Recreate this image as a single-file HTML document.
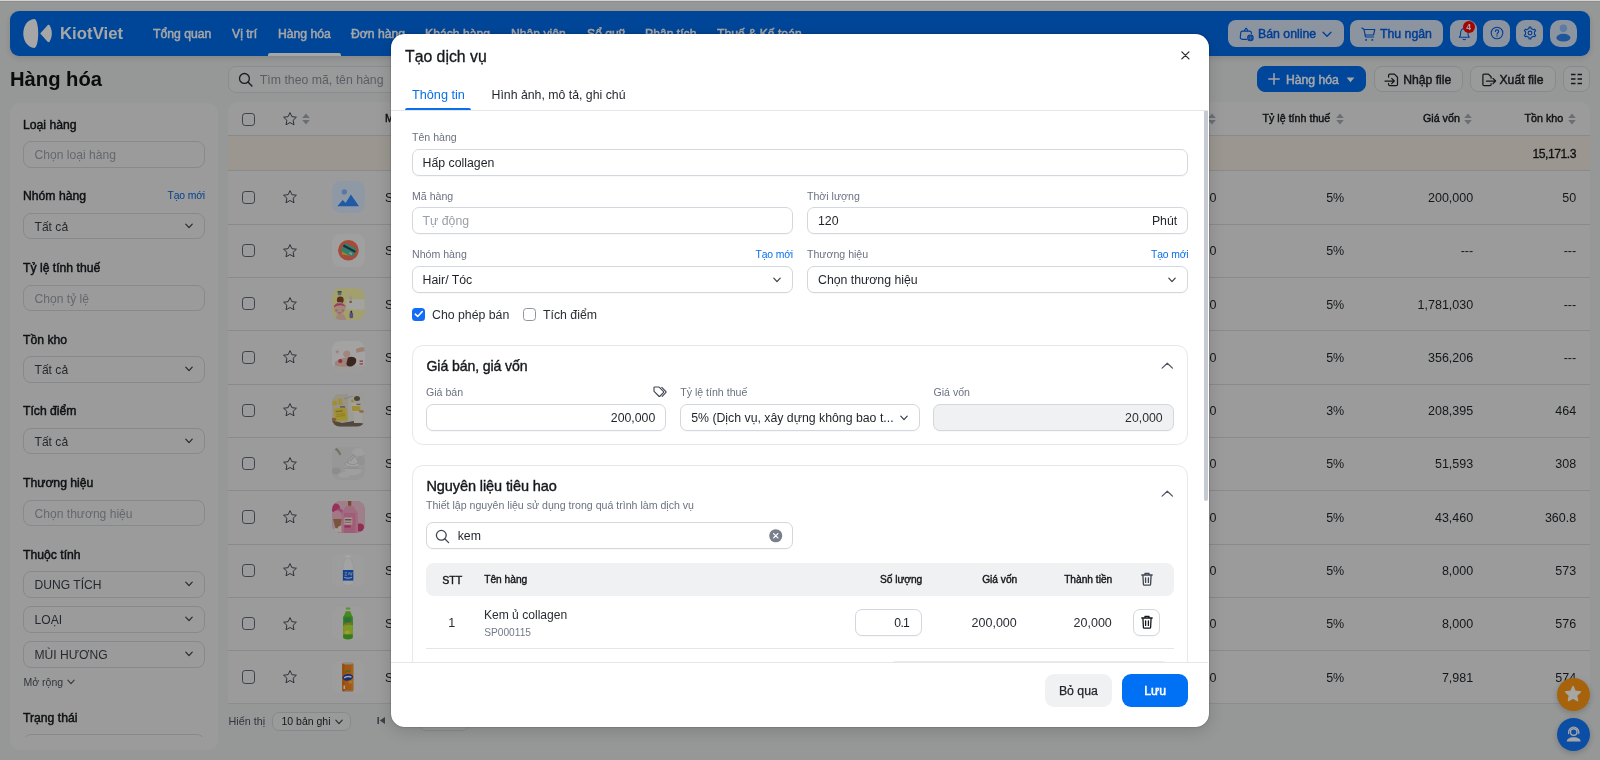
<!DOCTYPE html>
<html lang="vi">
<head>
<meta charset="utf-8">
<title>Hàng hóa - KiotViet</title>
<style>
*{box-sizing:border-box;margin:0;padding:0}
html,body{width:1600px;height:760px;overflow:hidden}
body{font-family:"Liberation Sans",sans-serif;background:#e7eae9;color:#1f2329;position:relative;font-size:12px}
.abs{position:absolute}
#root{position:absolute;left:0;top:0;width:1600px;height:760px;overflow:hidden;will-change:transform}
#page{position:absolute;left:0;top:0;width:1600px;height:760px;overflow:hidden;background:#e7eae9}
#topstrip{position:absolute;left:0;top:0;width:1600px;height:1.9px;background:linear-gradient(#d4d4d4 0,#d2d2d2 55%,#8c8e8e 56%,#8c8e8e 100%);z-index:6}
/* header */
#hdr{position:absolute;left:10px;top:11px;width:1580px;height:45px;background:#006cea;border-radius:9px;box-shadow:0 2px 6px rgba(0,0,0,.12)}
.nav{position:absolute;top:0;height:45px;line-height:46.600px;color:#fff;font-size:12.2px;white-space:nowrap;-webkit-text-stroke:.45px #fff}
#navline{position:absolute;left:258px;top:42px;width:73px;height:3px;background:#fff;border-radius:2px 2px 0 0}
.pill{position:absolute;top:9px;height:26.800px;border-radius:8px;background:#d8e4f4;color:#005fe6;font-size:12.3px;line-height:28.600px;white-space:nowrap;-webkit-text-stroke:.45px #005fe6}
/* title row */
#ptitle{position:absolute;left:10px;top:65px;font-size:20.2px;font-weight:700;line-height:28px;color:#111}
#search{position:absolute;left:228.300px;top:66px;width:400px;height:27px;border:1px solid #d4d7dc;border-radius:8px;background:#eceeed}
.btn{position:absolute;top:66px;height:26px;border-radius:8px;border:1px solid #d0d3d8;background:#eceeed;font-size:12.2px;line-height:26.200px;white-space:nowrap;color:#1f2329;-webkit-text-stroke:.45px}
/* sidebar */
#side{position:absolute;left:10px;top:102.500px;width:208px;height:647.500px;background:#eeefef;border-radius:10px;overflow:hidden}
.slabel{position:absolute;left:13px;margin-top:.4px;-webkit-text-stroke:.45px;font-size:12.2px;line-height:16px;color:#15181c;white-space:nowrap}
.sinput{position:absolute;left:13px;margin-top:-.3px;width:182px;height:26.300px;border:1px solid #d0d3d8;border-radius:8px;background:#eeefef;font-size:12.1px;line-height:26.200px;padding-left:10.500px;color:#9a9fa8;white-space:nowrap}
.sinput.sel{color:#3a3f47}
.chev{position:absolute;right:11px;top:9px;width:8px;height:6px}
.slink{position:absolute;right:13px;font-size:10.4px;letter-spacing:-.15px;color:#0a63d8;line-height:16px}
/* table */
#tbl{position:absolute;left:228px;top:102px;width:1362px;height:602px;background:#eeefef;border-radius:10px 10px 0 0;overflow:hidden;border-bottom:1px solid #d6d8dc}
.trow{position:absolute;left:0;width:1362px;border-top:1px solid #d3d5da}
.th{position:absolute;top:0;height:33px;line-height:33px;font-size:10.7px;-webkit-text-stroke:.4px;color:#15181c;white-space:nowrap}
.td{position:absolute;font-size:12.5px;color:#1f2329;white-space:nowrap;text-align:right;line-height:16px}
.cb{position:absolute;left:14px;width:13.200px;height:13.200px;border:1.100px solid #5f6775;border-radius:3.200px;background:transparent}
.thumb svg{display:block}
.thumb{position:absolute;left:104.300px;top:9.500px;width:32.500px;height:32.500px;border-radius:8.500px;overflow:hidden}
/* overlay */
#ovl{position:absolute;left:0;top:0;width:1600px;height:760px;background:rgba(0,0,0,.35);z-index:5}
/* modal */
#modal{position:absolute;left:391px;top:34px;width:817.600px;height:693.400px;background:#fff;border-radius:13.500px;z-index:10;overflow:hidden;box-shadow:0 0 1.5px rgba(0,0,30,.5),0 4px 16px rgba(0,0,0,.15)}
.ml{position:absolute;margin-top:-.4px;font-size:10.6px;color:#6b7280;line-height:14px;white-space:nowrap}
.minput{position:absolute;height:26.5px;border:1px solid #d3d7de;border-radius:7px;background:#fff;font-size:12.3px;line-height:26.200px;padding:0 10px;color:#1f2329;white-space:nowrap;box-shadow:0 1px 1px rgba(0,0,0,.03)}
.mlink{position:absolute;margin-top:.8px;font-size:10.4px;letter-spacing:-.15px;color:#0a6fe8;line-height:14px;white-space:nowrap}
.card{position:absolute;left:19.5px;width:776.300px;border:1px solid #e6e8ec;border-radius:11px;background:#fff}
.ctitle{position:absolute;left:14px;font-size:14.3px;-webkit-text-stroke:.38px;color:#15181c;line-height:18px;white-space:nowrap;letter-spacing:-.1px}
</style>
</head>
<body>
<div id="root">
<div id="page">
  <div id="hdr">
    <svg class="abs" style="left:13px;top:8px" width="30" height="29" viewBox="0 0 30 29"><path d="M11.2 0.1 C4.5 0.6 0.3 7 0.3 14.5 C0.3 22 4.5 28.4 11.2 28.9 C13.6 29 15.2 22 15.2 14.5 C15.2 7 13.6 0 11.2 0.1 Z" fill="#fff"/><path d="M17.2 14.4 L24.6 6.2 C25.3 5.5 26.2 5.6 26.7 6.5 C29.6 11.4 29.6 17.6 26.7 22.5 C26.2 23.4 25.3 23.5 24.6 22.8 Z" fill="#fff"/></svg>
    <div class="abs" style="left:50px;top:0;height:45px;line-height:46px;font-size:16.7px;font-weight:700;color:#fff;letter-spacing:.05px">KiotViet</div>
    <div class="nav" style="left:143px">Tổng quan</div>
    <div class="nav" style="left:222px">Vị trí</div>
    <div class="nav" style="left:268px">Hàng hóa</div>
    <div class="nav" style="left:341px">Đơn hàng</div>
    <div class="nav" style="left:415px">Khách hàng</div>
    <div class="nav" style="left:501px">Nhân viên</div>
    <div class="nav" style="left:577px">Sổ quỹ</div>
    <div class="nav" style="left:635px">Phân tích</div>
    <div class="nav" style="left:707px">Thuế &amp; Kế toán</div>
    <div id="navline"></div>
    <div class="pill" style="left:1218px;width:115.500px"><svg class="abs" style="left:10.500px;top:6.500px" width="16" height="15" viewBox="0 0 16 15"><path d="M5.300 4.100 6.600 1.500c.2-.4.800-.4 1 0L8.900 4.100" fill="none" stroke="#005fe6" stroke-width="1.150" stroke-linejoin="round"/><path d="M7.500 12.300H3.200c-1.200 0-2-.9-1.900-2L1.700 5.900c.1-1 .9-1.800 1.900-1.800h6.900c1 0 1.800.7 1.900 1.700l.1.900" fill="none" stroke="#005fe6" stroke-width="1.150" stroke-linecap="round"/><circle cx="11.400" cy="10.900" r="3.300" fill="#005fe6"/><path d="M11.400 8.500v4.800M9.900 9.500v2.800M12.900 9.500v2.800" stroke="#b9cdf0" stroke-width=".55"/></svg><span class="abs" style="left:30px">Bán online</span><svg class="abs" style="left:94px;top:10.500px" width="10" height="7" viewBox="0 0 10 7"><path d="M1 1.300 5 5.300 9 1.300" fill="none" stroke="#005fe6" stroke-width="1.300" stroke-linecap="round" stroke-linejoin="round"/></svg></div>
    <div class="pill" style="left:1340px;width:93.400px"><svg class="abs" style="left:10.500px;top:6.500px" width="16" height="15" viewBox="0 0 16 15"><path d="M.9 1.100 2.400 1.700c.3.100.5.400.6.700L4.500 10h8" fill="none" stroke="#005fe6" stroke-width="1.150" stroke-linecap="round" stroke-linejoin="round"/><path d="M3.100 2.500H13.800L12.500 8H4.200" fill="none" stroke="#005fe6" stroke-width="1.150" stroke-linecap="round" stroke-linejoin="round"/><circle cx="5.100" cy="12.900" r=".95" fill="#005fe6"/><circle cx="11.300" cy="12.900" r=".95" fill="#005fe6"/></svg><span class="abs" style="left:30px">Thu ngân</span></div>
    <div class="pill" style="left:1440px;width:26.800px;border-radius:9px"><svg class="abs" style="left:6.500px;top:6.500px" width="16" height="15" viewBox="0 0 16 15"><path d="M2.300 10.200c1-.9 1.300-2 1.300-3.500V5.800C3.600 3.300 5.200 1.600 7.300 1.600S11 3.300 11 5.800v.9c0 1.500.3 2.600 1.300 3.500z" fill="none" stroke="#005fe6" stroke-width="1.100" stroke-linejoin="round"/><path d="M6.200 12.300c.3.600 1.900.6 2.200 0" fill="none" stroke="#005fe6" stroke-width="1.200" stroke-linecap="round"/></svg><div class="abs" style="left:12.600px;top:1.300px;width:12.200px;height:12.200px;border-radius:50%;background:#fa0808;color:#fff;font-size:8.500px;font-weight:700;line-height:12.200px;text-align:center;-webkit-text-stroke:0">4</div></div>
    <div class="pill" style="left:1473.100px;width:26.800px;border-radius:9px"><svg class="abs" style="left:6.500px;top:6.300px" width="14" height="14" viewBox="0 0 14 14"><circle cx="7" cy="7" r="5.800" fill="none" stroke="#005fe6" stroke-width="1.100"/><path d="M5.300 5.500c0-2.200 3.400-2.200 3.400 0 0 1.300-1.700 1.300-1.700 2.700" fill="none" stroke="#005fe6" stroke-width="1.100" stroke-linecap="round"/><circle cx="7" cy="10" r=".75" fill="#005fe6"/></svg></div>
    <div class="pill" style="left:1506.400px;width:26.800px;border-radius:9px"><svg class="abs" style="left:6.600px;top:6.300px" width="14" height="14" viewBox="0 0 14 14"><path d="M5.97 2.41 L6.11 0.97 L7.89 0.97 L8.03 2.41 L10.46 3.82 L11.78 3.21 L12.67 4.75 L11.48 5.59 L11.48 8.41 L12.67 9.25 L11.78 10.79 L10.46 10.18 L8.03 11.59 L7.89 13.03 L6.11 13.03 L5.97 11.59 L3.54 10.18 L2.22 10.79 L1.33 9.25 L2.52 8.41 L2.52 5.59 L1.33 4.75 L2.22 3.21 L3.54 3.82Z" fill="none" stroke="#005fe6" stroke-width="1.100" stroke-linejoin="round"/><circle cx="7" cy="7" r="1.900" fill="none" stroke="#005fe6" stroke-width="1.100"/></svg></div>
    <div class="pill" style="left:1540px;width:26.800px;border-radius:10px"><svg class="abs" style="left:0;top:0" width="27" height="27" viewBox="0 0 27 27"><circle cx="13.400" cy="8.300" r="3.700" fill="#8fbdfb"/><ellipse cx="13.400" cy="17.700" rx="7" ry="3.900" fill="#2e83ee"/></svg></div>
  </div>
  <div id="ptitle">Hàng hóa</div>
  <div id="search"><svg class="abs" style="left:8.500px;top:5px" width="15" height="15" viewBox="0 0 14 14"><circle cx="6" cy="6" r="4.600" fill="none" stroke="#2a2e35" stroke-width="1.250"/><path d="M9.5 9.5 13 13" stroke="#2a2e35" stroke-width="1.3" stroke-linecap="round"/></svg><span class="abs" style="left:30.500px;top:0;line-height:26.200px;font-size:12.300px;color:#8b909a;white-space:nowrap">Tìm theo mã, tên hàng</span></div>
  <div class="btn" style="left:1257px;width:109px;background:#006ef0;border-color:#006ef0;color:#fff"><svg class="abs" style="left:10px;top:6px" width="12" height="12" viewBox="0 0 12 12"><path d="M6 .8v10.4M.8 6h10.4" stroke="#fff" stroke-width="1.5" stroke-linecap="round"/></svg><span class="abs" style="left:28px">Hàng hóa</span><svg class="abs" style="left:88px;top:10px" width="9" height="6" viewBox="0 0 9 6"><path d="M.6.6h7.8L4.5 5.2z" fill="#fff"/></svg></div>
  <div class="btn" style="left:1373.500px;width:89.500px"><svg class="abs" style="left:9.500px;top:5.500px" width="16" height="14" viewBox="0 0 16 14"><path d="M4.600 4.200V2.300c0-.7.500-1.200 1.200-1.200h4.600l3.100 3.100v7.200c0 .7-.5 1.200-1.200 1.200H5.800c-.7 0-1.200-.5-1.200-1.200v-.9" fill="none" stroke="#1f2329" stroke-width="1.250" stroke-linecap="round" stroke-linejoin="round"/><path d="M1 8h9.200M7.700 5.400 10.300 8 7.700 10.600" fill="none" stroke="#1f2329" stroke-width="1.250" stroke-linecap="round" stroke-linejoin="round"/></svg><span class="abs" style="left:28.700px">Nhập file</span></div>
  <div class="btn" style="left:1470.300px;width:86.200px"><svg class="abs" style="left:9.500px;top:5.500px" width="16" height="14" viewBox="0 0 16 14"><path d="M10.100 10.700v.7c0 .7-.5 1.200-1.200 1.200H3.100c-.7 0-1.200-.5-1.200-1.200V2.300c0-.7.500-1.200 1.200-1.200h4.300l2.700 2.700v1.400" fill="none" stroke="#1f2329" stroke-width="1.250" stroke-linecap="round" stroke-linejoin="round"/><path d="M5.400 8h9.200M12 5.400 14.600 8 12 10.600" fill="none" stroke="#1f2329" stroke-width="1.250" stroke-linecap="round" stroke-linejoin="round"/></svg><span class="abs" style="left:28.200px">Xuất file</span></div>
  <div class="btn" style="left:1563px;width:27px"><svg class="abs" style="left:6px;top:6px" width="13" height="12" viewBox="0 0 13 12"><path d="M1 1.5h4.5M7.5 1.5H12M1 6h4.5M7.5 6H12M1 10.5h4.5M7.5 10.5H12" stroke="#1f2329" stroke-width="1.6"/></svg></div>
  <div id="side">
<div class="slabel" style="top:14px">Loại hàng</div><div class="sinput" style="top:39px">Chọn loại hàng</div>
<div class="slabel" style="top:85.5px">Nhóm hàng</div><div class="slink" style="top:85.5px">Tạo mới</div><div class="sinput sel" style="top:110.5px">Tất cả<svg class="chev" viewBox="0 0 8 6"><path d="M.8 1.2 4 4.6 7.2 1.2" fill="none" stroke="#3a3f47" stroke-width="1.2" stroke-linecap="round" stroke-linejoin="round"/></svg></div>
<div class="slabel" style="top:157.5px">Tỷ lệ tính thuế</div><div class="sinput" style="top:182.5px">Chọn tỷ lệ</div>
<div class="slabel" style="top:229px">Tồn kho</div><div class="sinput sel" style="top:254px">Tất cả<svg class="chev" viewBox="0 0 8 6"><path d="M.8 1.2 4 4.6 7.2 1.2" fill="none" stroke="#3a3f47" stroke-width="1.2" stroke-linecap="round" stroke-linejoin="round"/></svg></div>
<div class="slabel" style="top:300.5px">Tích điểm</div><div class="sinput sel" style="top:325.5px">Tất cả<svg class="chev" viewBox="0 0 8 6"><path d="M.8 1.2 4 4.6 7.2 1.2" fill="none" stroke="#3a3f47" stroke-width="1.2" stroke-linecap="round" stroke-linejoin="round"/></svg></div>
<div class="slabel" style="top:372.5px">Thương hiệu</div><div class="sinput" style="top:397.5px">Chọn thương hiệu</div>
<div class="slabel" style="top:444px">Thuộc tính</div><div class="sinput sel" style="top:469px">DUNG TÍCH<svg class="chev" viewBox="0 0 8 6"><path d="M.8 1.2 4 4.6 7.2 1.2" fill="none" stroke="#3a3f47" stroke-width="1.2" stroke-linecap="round" stroke-linejoin="round"/></svg></div>
<div class="sinput sel" style="top:504px">LOẠI<svg class="chev" viewBox="0 0 8 6"><path d="M.8 1.2 4 4.6 7.2 1.2" fill="none" stroke="#3a3f47" stroke-width="1.2" stroke-linecap="round" stroke-linejoin="round"/></svg></div>
<div class="sinput sel" style="top:539px">MÙI HƯƠNG<svg class="chev" viewBox="0 0 8 6"><path d="M.8 1.2 4 4.6 7.2 1.2" fill="none" stroke="#3a3f47" stroke-width="1.2" stroke-linecap="round" stroke-linejoin="round"/></svg></div>
<div class="abs" style="left:13.500px;top:572.200px;font-size:10.500px;color:#4b5260;line-height:14px">Mở rộng<svg style="margin-left:4px;vertical-align:1px" width="8" height="6" viewBox="0 0 8 6"><path d="M.8 1.2 4 4.6 7.2 1.2" fill="none" stroke="#4b5260" stroke-width="1.1" stroke-linecap="round" stroke-linejoin="round"/></svg></div>
<div class="slabel" style="top:607px">Trạng thái</div>
<div class="abs" style="left:0;top:625px;width:208px;height:9.500px;overflow:hidden"><div class="sinput" style="top:6.500px"></div></div>
</div>
  <div id="tbl">
<div class="trow" style="top:0;height:33px;border-top:none"><div class="cb" style="top:10.700px"></div><svg class="abs" style="left:54px;top:9px" width="16" height="16" viewBox="0 0 16 16"><path d="M8 1.6 9.9 5.7 14.4 6.2 11.1 9.3 12 13.8 8 11.5 4 13.8 4.9 9.3 1.6 6.2 6.1 5.7z" fill="none" stroke="#454b56" stroke-width="1" stroke-linejoin="round"/></svg><svg class="abs" style="left:74px;top:11px" width="8" height="12" viewBox="0 0 8 12"><path d="M4 .4 7.800 5.100H.2z" fill="#a4a9b2"/><path d="M4 11.600 7.800 6.900H.2z" fill="#a4a9b2"/></svg><div class="th" style="left:157px">Mã hàng</div><svg class="abs" style="left:979.5px;top:11px" width="8" height="12" viewBox="0 0 8 12"><path d="M4 .4 7.800 5.100H.2z" fill="#a4a9b2"/><path d="M4 11.600 7.800 6.900H.2z" fill="#a4a9b2"/></svg><div class="th" style="left:1034.5px">Tỷ lệ tính thuế</div><svg class="abs" style="left:1108px;top:11px" width="8" height="12" viewBox="0 0 8 12"><path d="M4 .4 7.800 5.100H.2z" fill="#a4a9b2"/><path d="M4 11.600 7.800 6.900H.2z" fill="#a4a9b2"/></svg><div class="th" style="left:1195px">Giá vốn</div><svg class="abs" style="left:1236px;top:11px" width="8" height="12" viewBox="0 0 8 12"><path d="M4 .4 7.800 5.100H.2z" fill="#a4a9b2"/><path d="M4 11.600 7.800 6.900H.2z" fill="#a4a9b2"/></svg><div class="th" style="left:1296.5px">Tồn kho</div><svg class="abs" style="left:1339.5px;top:11px" width="8" height="12" viewBox="0 0 8 12"><path d="M4 .4 7.800 5.100H.2z" fill="#a4a9b2"/><path d="M4 11.600 7.800 6.900H.2z" fill="#a4a9b2"/></svg></div>
<div class="trow" style="top:33.200px;height:35.200px;background:#eee8de"><div class="td" style="right:14px;top:10px;font-size:12.200px;-webkit-text-stroke:.3px;letter-spacing:-.5px;color:#15181c">15,171.3</div></div>
<div class="trow" style="top:68.40px;height:53.3px"><div class="cb" style="top:19.300px"></div><svg class="abs" style="left:54px;top:17.900px" width="16" height="16" viewBox="0 0 16 16"><path d="M8 1.6 9.9 5.7 14.4 6.2 11.1 9.3 12 13.8 8 11.5 4 13.8 4.9 9.3 1.6 6.2 6.1 5.7z" fill="none" stroke="#454b56" stroke-width="1" stroke-linejoin="round"/></svg><div class="thumb" style="background:#dcebff"><svg width="32.5" height="32.5" viewBox="0 0 32.5 32.5"><circle cx="12.300" cy="10.900" r="2.700" fill="#86b9ff"/><path d="M5.300 25.200 10.700 18.900 13.600 22 18.900 13.400 27 25.200z" fill="#2e8aff"/></svg></div><div class="td" style="left:157px;top:18.5px;text-align:left">SP000125</div><div class="td" style="right:373.5px;top:18.5px">0</div><div class="td" style="right:245.8px;top:18.5px">5%</div><div class="td" style="right:116.8px;top:18.5px">200,000</div><div class="td" style="right:13.8px;top:18.5px">50</div></div>
<div class="trow" style="top:121.70px;height:53.3px"><div class="cb" style="top:19.300px"></div><svg class="abs" style="left:54px;top:17.900px" width="16" height="16" viewBox="0 0 16 16"><path d="M8 1.6 9.9 5.7 14.4 6.2 11.1 9.3 12 13.8 8 11.5 4 13.8 4.9 9.3 1.6 6.2 6.1 5.7z" fill="none" stroke="#454b56" stroke-width="1" stroke-linejoin="round"/></svg><div class="thumb" style="background:#f6f6f7"><svg width="32.5" height="32.5" viewBox="0 0 32.5 32.5"><circle cx="16.400" cy="16.200" r="10.300" fill="#ff7355"/><g transform="rotate(28 16.400 16.200)"><rect x="10.500" y="13.500" width="12" height="8" rx="1" fill="#f2c94c" transform="rotate(-22 16 17)"/><rect x="9.800" y="11.300" width="13.600" height="9" rx="1.200" fill="#4cc4a8"/><rect x="9.800" y="13.300" width="13.600" height="2.200" fill="#2d4660"/><rect x="18.500" y="17.200" width="3" height="1.700" rx=".4" fill="#d9f3ec"/></g></svg></div><div class="td" style="left:157px;top:18.5px;text-align:left">SP000124</div><div class="td" style="right:373.5px;top:18.5px">0</div><div class="td" style="right:245.8px;top:18.5px">5%</div><div class="td" style="right:116.8px;top:18.5px">---</div><div class="td" style="right:13.8px;top:18.5px">---</div></div>
<div class="trow" style="top:175.00px;height:53.3px"><div class="cb" style="top:19.300px"></div><svg class="abs" style="left:54px;top:17.900px" width="16" height="16" viewBox="0 0 16 16"><path d="M8 1.6 9.9 5.7 14.4 6.2 11.1 9.3 12 13.8 8 11.5 4 13.8 4.9 9.3 1.6 6.2 6.1 5.7z" fill="none" stroke="#454b56" stroke-width="1" stroke-linejoin="round"/></svg><div class="thumb" style="background:#f7f6aa"><svg width="32.5" height="32.5" viewBox="0 0 32.5 32.5"><rect x="14.500" y="11.300" width="18" height="10.200" fill="#fbfbf8"/><path d="M3.500 32.500c0-4 1.500-6.500 4-7.500l3 .5c2 1.500 3.500 4 3.500 7z" fill="#f6cdb8"/><circle cx="8.300" cy="12" r="3.400" fill="#8a4a2a"/><ellipse cx="7.600" cy="20.300" rx="5.600" ry="6.400" fill="#f8d2bf"/><path d="M1.900 19.500c.3-5.200 11-5.800 11.500-.6-3.200-2.300-8.200-2-11.500.6z" fill="#e9557f"/><path d="M2 18.200c1.500-3.500 9.500-4 11.300.2" fill="none" stroke="#f28aa6" stroke-width="1"/><circle cx="4.500" cy="22.500" r="1.300" fill="#f4a0a8"/><circle cx="10.800" cy="22.500" r="1.300" fill="#f4a0a8"/><path d="M6.200 24.500c1 .8 2 .8 3 0" stroke="#c8566a" stroke-width=".7" fill="none"/><rect x="5.800" y="3.800" width="3.600" height="3.400" rx=".8" fill="#7fa6a0"/><rect x="5.500" y="3" width="4.200" height="1.400" rx=".5" fill="#5c6f6d"/><rect x="17.200" y="7.600" width="2.800" height="6.500" rx=".9" fill="#f3e2c8"/><rect x="17.500" y="13" width="2.200" height="2" fill="#b9814f"/><rect x="17.500" y="24.600" width="3.600" height="5.600" rx="1.300" fill="#8a78b6"/><rect x="18.500" y="22.800" width="1.600" height="2" fill="#3f3653"/></svg></div><div class="td" style="left:157px;top:18.5px;text-align:left">SP000123</div><div class="td" style="right:373.5px;top:18.5px">0</div><div class="td" style="right:245.8px;top:18.5px">5%</div><div class="td" style="right:116.8px;top:18.5px">1,781,030</div><div class="td" style="right:13.8px;top:18.5px">---</div></div>
<div class="trow" style="top:228.30px;height:53.3px"><div class="cb" style="top:19.300px"></div><svg class="abs" style="left:54px;top:17.900px" width="16" height="16" viewBox="0 0 16 16"><path d="M8 1.6 9.9 5.7 14.4 6.2 11.1 9.3 12 13.8 8 11.5 4 13.8 4.9 9.3 1.6 6.2 6.1 5.7z" fill="none" stroke="#454b56" stroke-width="1" stroke-linejoin="round"/></svg><div class="thumb" style="background:#fbfafa"><svg width="32.5" height="32.500" viewBox="0 0 32.5 32.5"><rect x="0" y="24.500" width="32.500" height="8" fill="#f3eeee"/><path d="M3 21c4-3 8-4 12-4.500l4 1.500c1 3-1 6-4 7.500-5 .5-9 0-12-1z" fill="#f3c9b8"/><ellipse cx="14.800" cy="13" rx="3.600" ry="3.300" fill="#f5cfbd" transform="rotate(-25 14.800 13)"/><path d="M16 16.500c3-1.500 6.500-1 8 1.500 1 3-1 6.500-5 7.500-3 .5-5-1-4.500-3.500z" fill="#5a3a30"/><path d="M17.500 9.500c2-2.500 6-3.500 9-2l-1 4c-3-.5-5.500 0-7 1.500z" fill="#fbfbfb"/><path d="M24 8c3-1.500 6-2 8.500-1.500v4c-3 0-6 .5-8 1.500z" fill="#f1c3b0"/><circle cx="5.300" cy="10.800" r="2.700" fill="#fbf3f3"/><circle cx="5.300" cy="10.800" r="1.100" fill="#f2a7b3"/><circle cx="8.300" cy="20" r="2.100" fill="#e5475c"/><rect x="27" y="17" width="4.500" height="8" fill="#fafafa"/><rect x="27.500" y="19.500" width="3.500" height="1.300" fill="#e8596a"/><rect x="27.500" y="22.300" width="3.500" height="1.300" fill="#e8596a"/></svg></div><div class="td" style="left:157px;top:18.5px;text-align:left">SP000122</div><div class="td" style="right:373.5px;top:18.5px">0</div><div class="td" style="right:245.8px;top:18.5px">5%</div><div class="td" style="right:116.8px;top:18.5px">356,206</div><div class="td" style="right:13.8px;top:18.5px">---</div></div>
<div class="trow" style="top:281.60px;height:53.3px"><div class="cb" style="top:19.300px"></div><svg class="abs" style="left:54px;top:17.900px" width="16" height="16" viewBox="0 0 16 16"><path d="M8 1.6 9.9 5.7 14.4 6.2 11.1 9.3 12 13.8 8 11.5 4 13.8 4.9 9.3 1.6 6.2 6.1 5.7z" fill="none" stroke="#454b56" stroke-width="1" stroke-linejoin="round"/></svg><div class="thumb" style="background:#e6dfcb"><svg width="32.5" height="32.5" viewBox="0 0 32.5 32.5"><rect width="32.500" height="32.500" fill="#e9e3cf"/><rect x="16" y="0" width="17" height="32.500" fill="#f2efe6"/><path d="M0 26 10 29 22 27 32.500 30V32.500H0z" fill="#7d6f62"/><circle cx="2.800" cy="9" r="2.500" fill="#f4dc4a"/><rect x="6.200" y="4.500" width="4" height="6.500" fill="#f3dd55" transform="rotate(-8 8 8)"/><rect x="2.200" y="14" width="12.800" height="13" fill="#f7e04a" transform="rotate(-6 8.500 20.500)"/><rect x="4" y="16.500" width="7" height="1.300" fill="#b99b3a" transform="rotate(-6 8.500 20.500)"/><rect x="4" y="19.500" width="9" height=".9" fill="#d4bb44" transform="rotate(-6 8.500 20.500)"/><rect x="4" y="21.500" width="9" height=".9" fill="#d4bb44" transform="rotate(-6 8.500 20.500)"/><rect x="8" y="12.300" width="5" height="1.200" fill="#8f5aa0"/><rect x="19.500" y="9" width="9.500" height="9" rx="1" fill="#fbf9f1"/><rect x="20" y="12" width="8.500" height="5" fill="#f1dc52"/><rect x="24.500" y="9.800" width="4" height="1" fill="#8f5aa0"/><ellipse cx="25" cy="4.500" rx="3" ry="2.500" fill="#6f6a4e"/><rect x="22" y="18" width="8" height="11" fill="#f8f6ee"/><path d="M12 5 21 2" stroke="#c9c9d6" stroke-width="1.200"/><circle cx="20.500" cy="7" r="1.400" fill="#f0d94e"/><ellipse cx="1.800" cy="25.500" rx="2.500" ry="1.800" fill="#c98a5a"/><ellipse cx="29.500" cy="17.500" rx="2.500" ry="1.300" fill="#d9a06f"/></svg></div><div class="td" style="left:157px;top:18.5px;text-align:left">SP000121</div><div class="td" style="right:373.5px;top:18.5px">0</div><div class="td" style="right:245.8px;top:18.5px">3%</div><div class="td" style="right:116.8px;top:18.5px">208,395</div><div class="td" style="right:13.8px;top:18.5px">464</div></div>
<div class="trow" style="top:334.90px;height:53.3px"><div class="cb" style="top:19.300px"></div><svg class="abs" style="left:54px;top:17.900px" width="16" height="16" viewBox="0 0 16 16"><path d="M8 1.6 9.9 5.7 14.4 6.2 11.1 9.3 12 13.8 8 11.5 4 13.8 4.9 9.3 1.6 6.2 6.1 5.7z" fill="none" stroke="#454b56" stroke-width="1" stroke-linejoin="round"/></svg><div class="thumb" style="background:#e6e7e6"><svg width="32.5" height="32.5" viewBox="0 0 32.5 32.5"><rect width="32.500" height="32.500" fill="#e7e8e7"/><path d="M3 1c2 1.500 4 3.500 5 6" stroke="#a8b59a" stroke-width="2.200" fill="none" stroke-linecap="round"/><ellipse cx="27" cy="5" rx="7" ry="4" fill="#f3f4f3"/><ellipse cx="4" cy="24" rx="5" ry="3.500" fill="#d9dbd8"/><ellipse cx="12" cy="28" rx="6" ry="3" fill="#f2f3f1"/><path d="M13 17h16v7.500c0 2-3.500 3.500-8 3.500s-8-1.500-8-3.500z" fill="#f4f5f3"/><rect x="13" y="20.500" width="16" height="1.200" fill="#c9ddd9"/><ellipse cx="21" cy="17" rx="8" ry="3" fill="#fafafa" stroke="#cfd2ce" stroke-width=".7"/><path d="M15.500 16c1-4 4-7 6.500-8 .5 2 2.500 2.500 3.500 5 .6 1.500.4 2.500 0 3.500-3 1.500-7.500 1.500-10-.5z" fill="#f7f7f5" stroke="#c5c8c3" stroke-width=".6"/><path d="M18 14c1.500-1 3-2.500 4-4.500" stroke="#b9bcb7" stroke-width=".8" fill="none"/><ellipse cx="29" cy="14" rx="3.500" ry="5" fill="#dfe1df"/></svg></div><div class="td" style="left:157px;top:18.5px;text-align:left">SP000120</div><div class="td" style="right:373.5px;top:18.5px">0</div><div class="td" style="right:245.8px;top:18.5px">5%</div><div class="td" style="right:116.8px;top:18.5px">51,593</div><div class="td" style="right:13.8px;top:18.5px">308</div></div>
<div class="trow" style="top:388.20px;height:53.3px"><div class="cb" style="top:19.300px"></div><svg class="abs" style="left:54px;top:17.900px" width="16" height="16" viewBox="0 0 16 16"><path d="M8 1.6 9.9 5.7 14.4 6.2 11.1 9.3 12 13.8 8 11.5 4 13.8 4.9 9.3 1.6 6.2 6.1 5.7z" fill="none" stroke="#454b56" stroke-width="1" stroke-linejoin="round"/></svg><div class="thumb" style="background:#f3bfd3"><svg width="32.500" height="32.500" viewBox="0 0 32.5 32.5"><rect width="32.500" height="32.500" fill="#f4c3d5"/><circle cx="3.500" cy="7" r="4.500" fill="#e84a8c"/><circle cx="7.500" cy="11" r="3.500" fill="#f07aa8"/><circle cx="28" cy="26.500" r="4" fill="#e0457e"/><circle cx="5" cy="14.500" r="5" fill="#f9b9d0"/><path d="M1 18h9.500L7 29H4z" fill="#b9825c"/><circle cx="9" cy="28" r="3.300" fill="#fbf1ea"/><circle cx="4" cy="29.500" r="2.500" fill="#fbf1ea"/><path d="M12.500 8c0-2 1.500-3 3-3h4.500c1.500 0 3 1 3 3l3 4v20.500H9.500V12z" fill="#f7a6c6"/><rect x="12" y="12" width="11.500" height="20.500" fill="#f58fb8"/><rect x="16" y="0" width="3.300" height="4.800" fill="#b5714c"/><rect x="12.300" y="16.500" width="8" height="7" fill="#fdeef3"/><rect x="13" y="18" width="6.500" height="1.500" fill="#a8745a"/><rect x="13" y="20.800" width="6.500" height="1.100" fill="#c99a86"/><rect x="12.500" y="24.500" width="6" height="2" fill="#e0457e"/></svg></div><div class="td" style="left:157px;top:18.5px;text-align:left">SP000119</div><div class="td" style="right:373.5px;top:18.5px">0</div><div class="td" style="right:245.8px;top:18.5px">5%</div><div class="td" style="right:116.8px;top:18.5px">43,460</div><div class="td" style="right:13.8px;top:18.5px">360.8</div></div>
<div class="trow" style="top:441.50px;height:53.3px"><div class="cb" style="top:19.300px"></div><svg class="abs" style="left:54px;top:17.900px" width="16" height="16" viewBox="0 0 16 16"><path d="M8 1.6 9.9 5.7 14.4 6.2 11.1 9.3 12 13.8 8 11.5 4 13.8 4.9 9.3 1.6 6.2 6.1 5.7z" fill="none" stroke="#454b56" stroke-width="1" stroke-linejoin="round"/></svg><div class="thumb"><svg width="32.500" height="32.500" viewBox="0 0 32.500 32.500"><rect width="32.500" height="32.500" fill="#f1f2f2"/><rect x="13.600" y="1" width="5" height="3.600" rx="1" fill="#fdfdfd"/><path d="M13.300 4.600h5.600l1.800 5c.5 1.300.6 2 .6 3.500v16.400c0 2.600-10.400 2.600-10.400 0V13.100c0-1.500.1-2.200.6-3.500z" fill="#fbfbfc"/><path d="M13.300 4.600h5.600l1.800 5c.5 1.300.6 2 .6 3.500v16.400c0 2.600-10.400 2.600-10.400 0V13.100c0-1.500.1-2.200.6-3.500z" fill="none" stroke="#e1e3e6" stroke-width=".6"/><rect x="10.900" y="16" width="10.400" height="10.600" fill="#1d63e0"/><path d="M12.300 23.200c2.500 1.300 5 1.300 7.600 0" stroke="#e8f0ff" stroke-width="1.200" fill="none"/><path d="M12.600 18.300h2.200l-2 3h2.200M16 21.300l1.200-3 1.200 3M18.800 18.300l.6 3 .8-3" stroke="#cfe0ff" stroke-width=".7" fill="none"/></svg></div><div class="td" style="left:157px;top:18.5px;text-align:left">SP000118</div><div class="td" style="right:373.5px;top:18.5px">0</div><div class="td" style="right:245.8px;top:18.5px">5%</div><div class="td" style="right:116.8px;top:18.5px">8,000</div><div class="td" style="right:13.8px;top:18.5px">573</div></div>
<div class="trow" style="top:494.80px;height:53.3px"><div class="cb" style="top:19.300px"></div><svg class="abs" style="left:54px;top:17.900px" width="16" height="16" viewBox="0 0 16 16"><path d="M8 1.6 9.9 5.7 14.4 6.2 11.1 9.3 12 13.8 8 11.5 4 13.8 4.9 9.3 1.6 6.2 6.1 5.7z" fill="none" stroke="#454b56" stroke-width="1" stroke-linejoin="round"/></svg><div class="thumb"><svg width="32.500" height="32.500" viewBox="0 0 32.500 32.500"><rect width="32.500" height="32.500" fill="#f1f2f2"/><rect x="13.800" y=".4" width="4.600" height="2.600" rx=".9" fill="#8ee04a"/><rect x="14.100" y="2.600" width="4" height="1.600" fill="#f1f7e8"/><path d="M13.900 4.200h4.400l1.700 4.500c.5 1.300.7 2 .7 3.300v18.200c0 2.800-9.500 2.800-9.500 0V12c0-1.300.2-2 .7-3.300z" fill="#6fd12c"/><path d="M11.200 9.500h9.500v9h-9.500z" fill="#58c03a"/><rect x="12.500" y="10.800" width="6" height="4.500" fill="#2fae5a" opacity=".8"/><path d="M11.200 19c3-1.500 6-1.800 9.500-1v9.500h-9.500z" fill="#bfe838"/><ellipse cx="15.300" cy="25.500" rx="2.600" ry="2" fill="#f5ee58"/><path d="M12 17.500 20 15.800" stroke="#f2a33a" stroke-width="1.100"/><path d="M11.200 27.500h9.500v2.700c0 2.800-9.500 2.800-9.500 0z" fill="#56bd2a"/></svg></div><div class="td" style="left:157px;top:18.5px;text-align:left">SP000117</div><div class="td" style="right:373.5px;top:18.5px">0</div><div class="td" style="right:245.8px;top:18.5px">5%</div><div class="td" style="right:116.8px;top:18.5px">8,000</div><div class="td" style="right:13.8px;top:18.5px">576</div></div>
<div class="trow" style="top:548.10px;height:53.3px"><div class="cb" style="top:19.300px"></div><svg class="abs" style="left:54px;top:17.900px" width="16" height="16" viewBox="0 0 16 16"><path d="M8 1.6 9.9 5.7 14.4 6.2 11.1 9.3 12 13.8 8 11.5 4 13.8 4.9 9.3 1.6 6.2 6.1 5.7z" fill="none" stroke="#454b56" stroke-width="1" stroke-linejoin="round"/></svg><div class="thumb"><svg width="32.500" height="32.500" viewBox="0 0 32.500 32.500"><rect width="32.500" height="32.500" fill="#f1f2f2"/><rect x="10.300" y="1.800" width="11" height="28.800" rx="2.200" fill="#f7861c"/><rect x="10.300" y="1.800" width="2.200" height="28.800" rx="1" fill="#e8740f"/><rect x="19.300" y="1.800" width="2" height="28.800" rx="1" fill="#fb9a34"/><ellipse cx="15.800" cy="2.500" rx="5" ry="1" fill="#d5d6d8"/><ellipse cx="15.800" cy="30.200" rx="4.800" ry=".8" fill="#c9cacc"/><path d="M13 11.500c1.500-1.500 3.500-2 5-1.200" stroke="#3fae3a" stroke-width="1.300" fill="none"/><ellipse cx="15.800" cy="16.300" rx="5.300" ry="3.300" fill="#1f46b8" transform="rotate(-8 15.800 16.300)"/><path d="M12 16.800c2.500-1.300 5-1.600 7.500-.8" stroke="#fff" stroke-width="1.500" fill="none"/><ellipse cx="18.500" cy="21" rx="2.200" ry="1.600" fill="#fcb945"/><rect x="11.500" y="24.500" width="1.500" height="3.500" fill="#fff"/></svg></div><div class="td" style="left:157px;top:18.5px;text-align:left">SP000116</div><div class="td" style="right:373.5px;top:18.5px">0</div><div class="td" style="right:245.8px;top:18.5px">5%</div><div class="td" style="right:116.8px;top:18.5px">7,981</div><div class="td" style="right:13.8px;top:18.5px">574</div></div>
</div>
  <div class="abs" style="left:228.500px;top:713.600px;font-size:10.800px;color:#4b5260;line-height:14px">Hiển thị</div>
  <div class="abs" style="left:272px;top:711.500px;width:79px;height:19px;border:1px solid #d0d3d8;border-radius:7px;background:#eceeed;font-size:10.500px;line-height:17.500px;padding-left:8.500px;color:#1f2329;white-space:nowrap">10 bản ghi<svg class="abs" style="left:62px;top:6px" width="8" height="6" viewBox="0 0 8 6"><path d="M.8 1.200 4 4.600 7.200 1.200" fill="none" stroke="#3a3f47" stroke-width="1.100" stroke-linecap="round" stroke-linejoin="round"/></svg></div>
  <svg class="abs" style="left:377px;top:716.200px" width="9" height="9" viewBox="0 0 9 9"><path d="M1.200 1v7" stroke="#5d646f" stroke-width="1.600"/><path d="M8 1v7L2.800 4.500z" fill="#5d646f"/></svg>
  <div class="abs" style="left:418.500px;top:711.500px;width:50px;height:19px;border:1px solid #d0d3d8;border-radius:7px;background:#eceeed"></div>
  <div class="abs" style="left:1556.500px;top:677.500px;width:33px;height:33px;border-radius:50%;background:#ff9812;box-shadow:0 2px 6px rgba(0,0,0,.2)"><svg class="abs" style="left:7.500px;top:7px" width="18" height="18" viewBox="0 0 18 18"><path d="M9 1.300 11.300 6.200 16.600 6.800 12.700 10.500 13.700 15.800 9 13.200 4.300 15.800 5.300 10.500 1.400 6.800 6.700 6.200z" fill="#fff" stroke="#fff" stroke-width="1.200" stroke-linejoin="round"/></svg></div>
  <div class="abs" style="left:1556.500px;top:717.500px;width:33px;height:33px;border-radius:50%;background:#1278fb;box-shadow:0 2px 6px rgba(0,0,0,.2)"><svg class="abs" style="left:7px;top:7px" width="19" height="19" viewBox="0 0 19 19"><circle cx="9.700" cy="7" r="3.300" fill="none" stroke="#fff" stroke-width="1.400"/><path d="M4.600 8.500V7.300a5.100 5.100 0 0 1 10.200 0v1.200" fill="none" stroke="#fff" stroke-width="1.300" stroke-linecap="round"/><path d="M2.800 16.500c0-2.600 2.600-4.200 6.900-4.200s6.900 1.600 6.900 4.200z" fill="#fff"/></svg></div>
</div>
<div id="topstrip"></div>
<div id="ovl"></div>
<div id="modal">
  <div class="abs" style="left:14px;top:12.600px;font-size:15.800px;line-height:20px;color:#15181c;-webkit-text-stroke:.3px #15181c;white-space:nowrap">Tạo dịch vụ</div>
  <svg class="abs" style="left:790.200px;top:17px" width="8.800" height="8.800" viewBox="0 0 9 9"><path d="M.9.900 8.100 8.100M8.100.900.900 8.100" stroke="#2a2e35" stroke-width="1.300" stroke-linecap="round"/></svg>
  <div class="abs" style="left:21px;top:52.700px;font-size:12.700px;line-height:16px;color:#0a6fe8;white-space:nowrap">Thông tin</div>
  <div class="abs" style="left:100.500px;top:52.700px;font-size:12.300px;line-height:16px;color:#1f2329;white-space:nowrap">Hình ảnh, mô tả, ghi chú</div>
  <div class="abs" style="left:0;top:76px;width:817px;height:1px;background:#e4e6ea"></div>
  <div class="abs" style="left:13.500px;top:73.500px;width:66.500px;height:2.800px;background:#0a6fe8;border-radius:2px 2px 0 0"></div>
  <div id="mbody" class="abs" style="left:0;top:77px;width:817px;height:551.100px;overflow:hidden">
  <div class="abs" style="left:1px;top:-77px;width:817px;height:900px">
    <div class="ml" style="left:20px;top:96.500px">Tên hàng</div>
    <div class="minput" style="left:19.600px;top:115.400px;width:776.600px">Hấp collagen</div>
    <div class="ml" style="left:20px;top:155px">Mã hàng</div>
    <div class="minput" style="left:19.600px;top:173.300px;width:381.500px;color:#9aa0a9">Tự động</div>
    <div class="ml" style="left:415px;top:155px">Thời lượng</div>
    <div class="minput" style="left:415px;top:173.300px;width:381.200px">120<span class="abs" style="right:10px;top:0">Phút</span></div>
    <div class="ml" style="left:20px;top:213.300px">Nhóm hàng</div><div class="mlink" style="right:416px;top:213.300px">Tạo mới</div>
    <div class="minput" style="left:19.600px;top:232.200px;width:381.500px">Hair/ Tóc<svg class="abs" style="right:10.800px;top:10px" width="8" height="6" viewBox="0 0 8 6"><path d="M.8 1.200 4 4.600 7.200 1.200" fill="none" stroke="#3a3f47" stroke-width="1.200" stroke-linecap="round" stroke-linejoin="round"/></svg></div>
    <div class="ml" style="left:415px;top:213.300px">Thương hiệu</div><div class="mlink" style="right:20.500px;top:213.300px">Tạo mới</div>
    <div class="minput" style="left:415px;top:232.200px;width:381.200px">Chọn thương hiệu<svg class="abs" style="right:10.800px;top:10px" width="8" height="6" viewBox="0 0 8 6"><path d="M.8 1.200 4 4.600 7.200 1.200" fill="none" stroke="#3a3f47" stroke-width="1.200" stroke-linecap="round" stroke-linejoin="round"/></svg></div>
    <div class="abs" style="left:19.600px;top:273.500px;width:13.200px;height:13.200px;border-radius:3.500px;background:#116df6"><svg class="abs" style="left:2px;top:2.600px" width="9.500" height="8" viewBox="0 0 9.500 8"><path d="M1.300 4.200 3.700 6.500 8.300 1.500" fill="none" stroke="#fff" stroke-width="1.600" stroke-linecap="round" stroke-linejoin="round"/></svg></div>
    <div class="abs" style="left:40px;top:273px;font-size:12.300px;line-height:16px;color:#2a2e35;white-space:nowrap">Cho phép bán</div>
    <div class="abs" style="left:131px;top:273.500px;width:13.200px;height:13.200px;border-radius:3.500px;border:1.200px solid #8b94a3;background:#fff"></div>
    <div class="abs" style="left:151px;top:273px;font-size:12.300px;line-height:16px;color:#2a2e35;white-space:nowrap">Tích điểm</div>

    <div class="card" style="top:311.300px;height:99.700px">
      <div class="ctitle" style="top:10.700px;font-size:14.100px">Giá bán, giá vốn</div><svg class="abs" style="left:748.700px;top:15.700px" width="12.600" height="7.200" viewBox="0 0 14 8"><path d="M1.200 6.800 7 1.400 12.800 6.800" fill="none" stroke="#4a5362" stroke-width="1.350" stroke-linecap="round" stroke-linejoin="round"/></svg>
      <div class="ml" style="left:13.500px;top:39.500px">Giá bán</div>
      <svg class="abs" style="left:240.500px;top:40px" width="14" height="12" viewBox="0 0 14 12"><path d="M1 1.800c0-.5.400-.8.800-.8h3.900c.3 0 .5.100.7.300l4 4c.4.400.4 1 0 1.400L7.100 10c-.4.400-1 .4-1.400 0l-4.400-4.300C1.100 5.500 1 5.300 1 5z" fill="none" stroke="#3f4651" stroke-width="1.150"/><path d="M8.800 1.300 12.700 5.300c.4.400.4 1 0 1.400L9.200 10.300" fill="none" stroke="#3f4651" stroke-width="1.150" stroke-linecap="round"/></svg>
      <div class="minput" style="left:13.200px;top:57.700px;height:27.300px;line-height:26.800px;width:240.600px;text-align:right">200,000</div>
      <div class="ml" style="left:267.700px;top:39.500px">Tỷ lệ tính thuế</div>
      <div class="minput" style="left:267.700px;top:57.700px;height:27.300px;line-height:26.800px;width:239.600px">5% (Dịch vụ, xây dựng không bao t...<svg class="abs" style="right:10.800px;top:10px" width="8" height="6" viewBox="0 0 8 6"><path d="M.8 1.200 4 4.600 7.200 1.200" fill="none" stroke="#3a3f47" stroke-width="1.200" stroke-linecap="round" stroke-linejoin="round"/></svg></div>
      <div class="ml" style="left:521px;top:39.500px">Giá vốn</div>
      <div class="minput" style="left:520.800px;top:57.700px;height:27.300px;line-height:26.800px;width:240.400px;text-align:right;background:#f0f1f3;color:#2a2e35">20,000</div>
    </div>

    <div class="card" style="top:431.300px;height:330px">
      <div class="ctitle" style="top:10.700px;font-size:14.500px">Nguyên liệu tiêu hao</div><svg class="abs" style="left:748.700px;top:23.700px" width="12.600" height="7.200" viewBox="0 0 14 8"><path d="M1.200 6.800 7 1.400 12.800 6.800" fill="none" stroke="#4a5362" stroke-width="1.350" stroke-linecap="round" stroke-linejoin="round"/></svg>
      <div class="ml" style="left:13.500px;top:32.500px">Thiết lập nguyên liệu sử dụng trong quá trình làm dịch vụ</div>
      <div class="minput" style="left:13.200px;top:55.500px;height:27.300px;line-height:26.800px;width:367.600px;padding-left:31px"><svg class="abs" style="left:8.800px;top:5.800px" width="15" height="15" viewBox="0 0 15 15"><circle cx="6.300" cy="6.300" r="4.900" fill="none" stroke="#3f4651" stroke-width="1.300"/><path d="M10 10 13.600 13.600" stroke="#3f4651" stroke-width="1.300" stroke-linecap="round"/></svg>kem<svg class="abs" style="right:9.300px;top:6.300px" width="13.500" height="13.500" viewBox="0 0 14 14"><circle cx="7" cy="7" r="6.800" fill="#79808c"/><path d="M4.800 4.800 9.200 9.200M9.200 4.800 4.800 9.200" stroke="#fff" stroke-width="1.400" stroke-linecap="round"/></svg></div>
      <div class="abs" style="left:13.200px;top:96.300px;width:748.400px;height:33.200px;background:#f0f1f3;border-radius:8px">
        <div class="abs" style="left:16.500px;top:10.300px;font-size:10.6px;-webkit-text-stroke:.4px;line-height:14px;color:#15181c">STT</div>
        <div class="abs" style="left:58.500px;top:10.300px;font-size:10.2px;-webkit-text-stroke:.4px;line-height:14px;color:#15181c;white-space:nowrap">Tên hàng</div>
        <div class="abs" style="right:251.800px;top:10.300px;font-size:10.2px;-webkit-text-stroke:.4px;line-height:14px;color:#15181c;white-space:nowrap">Số lượng</div>
        <div class="abs" style="right:156.800px;top:10.300px;font-size:10.2px;-webkit-text-stroke:.4px;line-height:14px;color:#15181c;white-space:nowrap">Giá vốn</div>
        <div class="abs" style="right:61.800px;top:10.300px;font-size:10.2px;-webkit-text-stroke:.4px;line-height:14px;color:#15181c;white-space:nowrap">Thành tiền</div>
        <svg class="abs" style="left:715px;top:9.5px" width="12" height="14" viewBox="0 0 12 14"><path d="M.8 3h10.400M4 3V1.300h4V3M1.900 3l.5 9.300c0 .5.400.9.900.9h5.400c.5 0 .9-.4.900-.9L10.100 3" fill="none" stroke="#3f4651" stroke-width="1.300" stroke-linecap="round" stroke-linejoin="round"/><path d="M4.600 5.800v4.600M7.400 5.800v4.600" stroke="#3f4651" stroke-width="1.300" stroke-linecap="round"/></svg>
      </div>
      <div class="abs" style="left:13.200px;top:129.500px;width:748.400px;height:53px;border-bottom:1px solid #e4e6ea">
        <div class="abs" style="left:0;width:52px;top:19.300px;text-align:center;font-size:12.500px;line-height:16px;color:#2a2e35">1</div>
        <div class="abs" style="left:58.200px;top:11px;font-size:12.100px;line-height:16px;color:#2a2e35;white-space:nowrap">Kem ủ collagen</div>
        <div class="abs" style="left:58.500px;top:30.500px;font-size:10.200px;line-height:14px;color:#737b89;white-space:nowrap">SP000115</div>
        <div class="minput" style="left:429.500px;top:13.300px;width:66.500px;text-align:right;font-size:12.200px;letter-spacing:-.7px;padding-right:11.500px">0.1</div>
        <div class="abs" style="right:157.300px;top:19.300px;font-size:12.500px;line-height:16px;color:#2a2e35">200,000</div>
        <div class="abs" style="right:62.300px;top:19.300px;font-size:12.500px;line-height:16px;color:#2a2e35">20,000</div>
        <div class="minput" style="left:707.600px;top:13.300px;width:26.500px;padding:0"><svg class="abs" style="left:6.3px;top:5.3px" width="12" height="14" viewBox="0 0 12 14"><path d="M.8 3h10.400M4 3V1.300h4V3M1.900 3l.5 9.300c0 .5.400.9.900.9h5.400c.5 0 .9-.4.900-.9L10.100 3" fill="none" stroke="#15181c" stroke-width="1.300" stroke-linecap="round" stroke-linejoin="round"/><path d="M4.600 5.800v4.600M7.400 5.800v4.600" stroke="#15181c" stroke-width="1.300" stroke-linecap="round"/></svg></div>
      </div>
      <div class="abs" style="left:475px;top:194.400px;width:282px;height:26px;border:1px solid #e9ebef;border-radius:8px"></div>
    </div>
  </div>
  </div>
  <div class="abs" style="left:812.500px;top:76.600px;width:4.200px;height:390.500px;background:#c6cad3;border-radius:0 0 3px 3px"></div>
  <div class="abs" style="left:0;top:628.100px;width:817px;height:1px;background:#e4e6ea"></div>
  <div class="abs" style="left:654px;top:640.200px;width:66.800px;height:33px;border-radius:9px;background:#f0f1f3;font-size:12.300px;line-height:34.600px;text-align:center;color:#1f2329;-webkit-text-stroke:.25px #1f2329">Bỏ qua</div>
  <div class="abs" style="left:731px;top:640.200px;width:66.200px;height:33px;border-radius:9px;background:#0070f4;font-size:12.200px;-webkit-text-stroke:.5px;line-height:34.600px;text-align:center;color:#fff">Lưu</div>
</div>
</div>
</body>
</html>
